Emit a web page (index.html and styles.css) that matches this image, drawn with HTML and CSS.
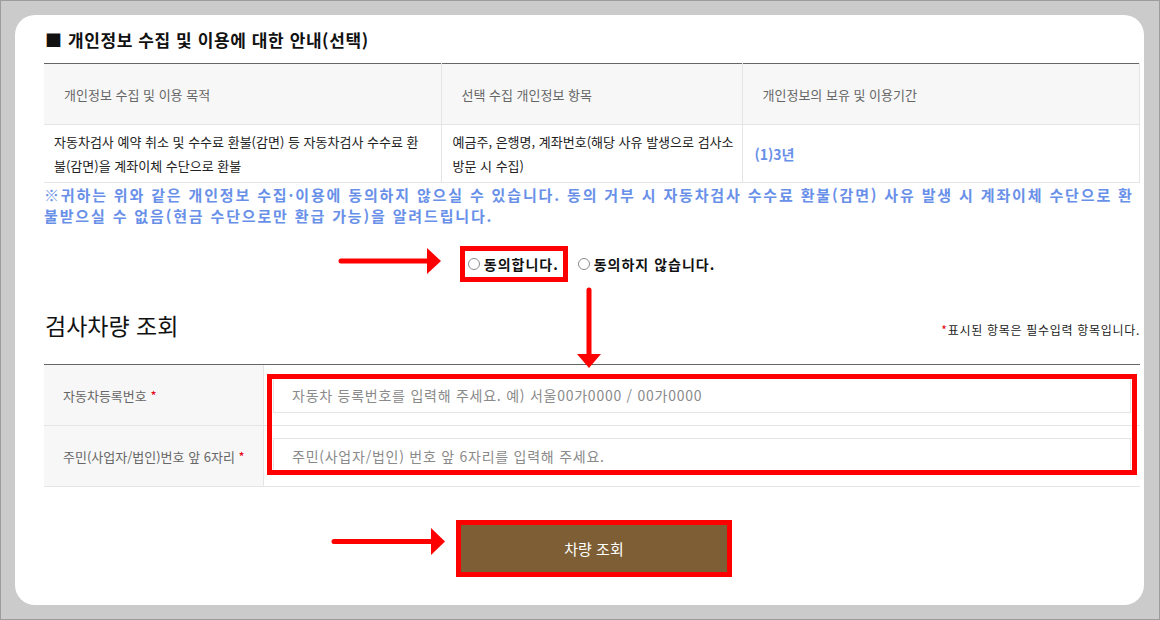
FILE: index.html
```html
<!DOCTYPE html>
<html lang="ko">
<head>
    <meta charset="UTF-8">
    <title>검사차량 조회</title>
    <link rel="stylesheet" href="styles.css">
</head>
<body>
    <div class="card">
        <h2 class="section-title">■ 개인정보 수집 및 이용에 대한 안내(선택)</h2>

        <table class="info-table">
            <colgroup>
                <col class="col-purpose">
                <col class="col-items">
                <col>
            </colgroup>
            <thead>
                <tr>
                    <th>개인정보 수집 및 이용 목적</th>
                    <th>선택 수집 개인정보 항목</th>
                    <th>개인정보의 보유 및 이용기간</th>
                </tr>
            </thead>
            <tbody>
                <tr>
                    <td class="purpose">자동차검사 예약 취소 및 수수료 환불(감면) 등 자동차검사 수수료 환불(감면)을 계좌이체 수단으로 환불</td>
                    <td class="items">예금주, 은행명, 계좌번호(해당 사유 발생으로 검사소 방문 시 수집)</td>
                    <td class="period">(1)3년</td>
                </tr>
            </tbody>
        </table>

        <p class="notice">※귀하는 위와 같은 개인정보 수집·이용에 동의하지 않으실 수 있습니다. 동의 거부 시 자동차검사 수수료 환불(감면) 사유 발생 시 계좌이체 수단으로 환불받으실 수 없음(현금 수단으로만 환급 가능)을 알려드립니다.</p>

        <div class="agree">
            <label class="agree-opt marked"><input type="radio" name="agree"> 동의합니다.</label>
            <label class="agree-opt"><input type="radio" name="agree"> 동의하지 않습니다.</label>
        </div>

        <div class="search-head">
            <h3>검사차량 조회</h3>
            <p class="req-note"><span class="req">*</span>표시된 항목은 필수입력 항목입니다.</p>
        </div>

        <div class="search-form">
            <div class="form-row">
                <div class="form-label">자동차등록번호&nbsp;<span class="req">*</span></div>
                <div class="form-field">
                    <input type="text" placeholder="자동차 등록번호를 입력해 주세요. 예) 서울00가0000 / 00가0000">
                </div>
            </div>
            <div class="form-row">
                <div class="form-label">주민(사업자/법인)번호 앞 6자리&nbsp;<span class="req">*</span></div>
                <div class="form-field">
                    <input type="text" placeholder="주민(사업자/법인) 번호 앞 6자리를 입력해 주세요.">
                </div>
            </div>
        </div>

        <div class="btn-wrap">
            <button class="search-btn">차량 조회</button>
        </div>

        <!-- annotation layer -->
        <svg class="marks" width="1129" height="590" viewBox="0 0 1129 590">
            <g stroke="#ff0000" stroke-width="5" stroke-linecap="round">
                <line x1="326" y1="246" x2="414" y2="246"/>
                <line x1="574" y1="275" x2="574" y2="342"/>
                <line x1="319" y1="526.5" x2="418" y2="526.5"/>
            </g>
            <g fill="#ff0000">
                <polygon points="412,233 426,246 412,259"/>
                <polygon points="562,339 586,339 574,353"/>
                <polygon points="416,513 430,526.5 416,540"/>
            </g>
            <rect x="254.5" y="361.5" width="865" height="96" fill="none" stroke="#ff0000" stroke-width="5"/>
        </svg>
    </div>
</body>
</html>
```

FILE: styles.css
```css
:root {
    --line: #e5e5e5;
    --head-bg: #f7f7f7;
    --blue: #6990e8;
    --mark: #ff0000;
}

body {
    margin: 0;
    height: 620px;
    box-sizing: border-box;
    padding: 14px;
    border: 1px solid #9d9d9d;
    background: #cbcbcb;
    font-family: "Noto Sans CJK KR", "Noto Sans", sans-serif;
    color: #222;
    overflow: hidden;
}

.card {
    position: relative;
    width: 1129px;
    height: 590px;
    box-sizing: border-box;
    padding: 13px 4px 0 29px;
    background: #fff;
    border-radius: 20px;
}

.section-title {
    margin: 0 0 12px;
    padding-left: 1px;
    font-size: 17px;
    line-height: 23px;
    font-weight: 700;
    letter-spacing: 0.6px;
    color: #111;
}

/* info table */
.info-table {
    width: 100%;
    border-collapse: collapse;
    table-layout: fixed;
    border-top: 1px solid #666;
    font-size: 13px;
}

.col-purpose { width: 397px; }
.col-items { width: 301px; }

.info-table th,
.info-table td {
    border: 1px solid var(--line);
    vertical-align: middle;
    text-align: left;
}

.info-table th:first-child,
.info-table td:first-child {
    border-left: 0;
}

.info-table th {
    height: 60px;
    padding: 0 20px;
    border-top: 0;
    background: var(--head-bg);
    font-weight: 400;
    color: #666;
}

.info-table td {
    height: 57px;
    line-height: 24px;
    color: #222;
}

.info-table .purpose { padding: 0 16px 0 10px; }
.info-table .items { padding: 0 4px 0 11px; }

.info-table .period {
    padding: 0 12px;
    font-size: 14px;
    font-weight: 700;
    color: var(--blue);
}

.notice {
    margin: 1px 0 0;
    font-size: 15px;
    line-height: 21px;
    font-weight: 700;
    color: var(--blue);
    letter-spacing: 1.85px;
}

/* agree radios */
.agree {
    display: flex;
    justify-content: center;
    gap: 12px;
    margin-top: 25px;
}

.agree-opt {
    display: flex;
    align-items: center;
    gap: 4px;
    height: 26px;
    padding: 0 4px 0 3px;
    box-sizing: border-box;
    font-size: 14px;
    font-weight: 700;
    letter-spacing: 1px;
    color: #111;
}

.agree-opt input {
    appearance: none;
    width: 12px;
    height: 12px;
    margin: 0;
    border: 1px solid #8c8c8c;
    border-radius: 50%;
    background: #fff;
}

.marked {
    outline: 5px solid var(--mark);
}

/* search */
.search-head {
    display: flex;
    justify-content: space-between;
    align-items: baseline;
    margin-top: 31px;
}

.search-head h3 {
    margin: 0;
    padding-left: 1px;
    font-size: 23px;
    line-height: 34px;
    font-weight: 400;
    color: #111;
}

.req-note {
    margin: 0;
    font-size: 12px;
    letter-spacing: 0.7px;
    color: #222;
}

.req {
    color: #e60012;
}

.search-form {
    margin-top: 22px;
    border-top: 1px solid #666;
}

.form-row {
    display: grid;
    grid-template-columns: 220px 1fr;
    border-bottom: 1px solid var(--line);
}

.form-label {
    display: flex;
    align-items: center;
    padding-left: 19px;
    background: var(--head-bg);
    border-right: 1px solid var(--line);
    font-size: 13px;
    color: #666;
}

.form-field {
    padding: 12px 9px;
}

.form-field input {
    display: block;
    width: 100%;
    height: 36px;
    box-sizing: border-box;
    padding: 0 18px;
    border: 1px solid var(--line);
    font-family: inherit;
    font-size: 14px;
    letter-spacing: 0.75px;
    color: #333;
}

.form-field input::placeholder {
    color: #8a8a8a;
}

.btn-wrap {
    display: flex;
    justify-content: center;
    margin-top: 38px;
    padding-left: 4px;
}

.search-btn {
    width: 266px;
    height: 47px;
    border: 0;
    background: #7e5e34;
    color: #fff;
    font-family: inherit;
    font-size: 15px;
    outline: 5px solid var(--mark);
}

.marks {
    position: absolute;
    left: 0;
    top: 0;
    pointer-events: none;
}
```
